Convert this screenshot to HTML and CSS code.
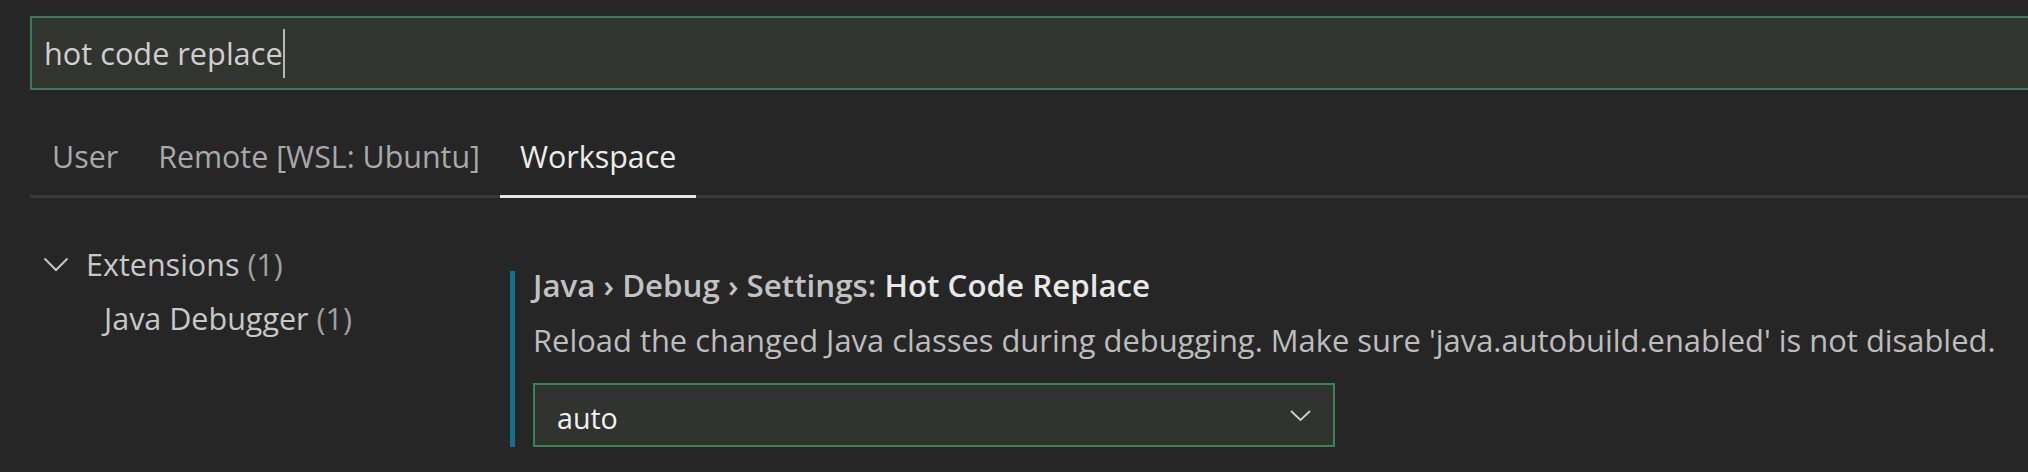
FILE: index.html
```html
<!DOCTYPE html>
<html lang="en">
<head>
<meta charset="utf-8">
<title>Settings</title>
<link rel="stylesheet" href="styles.css">
</head>
<body>
<div class="page">
  <div class="search"><span class="search-text">hot code replace</span><span class="caret"></span></div>
  <div class="tabs">
    <div class="tab">User</div>
    <div class="tab">Remote [WSL: Ubuntu]</div>
    <div class="tab active">Workspace</div>
  </div>
  <div class="main">
    <nav class="tree">
      <div class="tree-row group">
        <svg class="twistie" width="26" height="15" viewBox="0 0 26 15"><path d="M1.5 1.5 L13 13 L24.5 1.5" fill="none" stroke="#c5c5c5" stroke-width="2"/></svg>
        <span>Extensions <span class="count">(1)</span></span>
      </div>
      <div class="tree-row child"><span>Java Debugger <span class="count">(1)</span></span></div>
    </nav>
    <section class="setting">
      <div class="title"><span class="cat">Java › Debug › Settings: </span><span class="label">Hot Code Replace</span></div>
      <div class="desc">Reload the changed Java classes during debugging. Make sure 'java.autobuild.enabled' is not disabled.</div>
      <div class="select">
        <span class="value">auto</span>
        <svg class="chev" width="21" height="11" viewBox="0 0 21 11"><path d="M1 1 L10.5 10 L20 1" fill="none" stroke="#d0d0d0" stroke-width="1.8"/></svg>
      </div>
    </section>
  </div>
</div>
</body>
</html>
```
FILE: styles.css
```css
html, body {
  margin: 0;
  padding: 0;
  background: #262626;
  overflow: hidden;
  height: 100%;
}
body {
  font-family: "Open Sans", "Noto Sans", sans-serif;
  color: #cccccc;
}
.page {
  padding: 16px 0 0 30px;
}
.search {
  height: 74px;
  box-sizing: border-box;
  border: 2px solid #3b7a55;
  border-right: none;
  background: #323430;
  margin-right: -10px;
  display: flex;
  align-items: center;
  padding-left: 12px;
}
.search-text {
  font-size: 30.7px;
  color: #cfcfcf;
  white-space: nowrap;
}
.caret {
  width: 2px;
  height: 49px;
  background: #b8b8b8;
}
.tabs {
  display: flex;
  margin-top: 47px;
  padding-left: 2px;
  border-bottom: 3px solid #3a3a3a;
}
.tab {
  font-size: 30.4px;
  line-height: 40px;
  padding: 0 20px 18px;
  margin-bottom: -3px;
  border-bottom: 3px solid transparent;
  color: #a9a9a9;
  white-space: nowrap;
}
.tab.active {
  color: #ececec;
  border-bottom-color: #e7e7e7;
}
.main {
  display: flex;
}
.tree {
  width: 480px;
  flex: none;
  margin-top: 39px;
  font-size: 30.5px;
  line-height: 54px;
  color: #c8c8c8;
}
.tree-row {
  display: flex;
  align-items: center;
  white-space: nowrap;
}
.tree-row.group {
  padding-left: 13px;
}
.twistie {
  margin-right: 17px;
}
.tree-row.child {
  padding-left: 74px;
}
.count {
  color: #a0a0a0;
}
.setting {
  margin-top: 73px;
  border-left: 5px solid #14718c;
  padding-left: 18px;
  height: 176px;
  box-sizing: border-box;
}
.title {
  font-size: 31.3px;
  line-height: 28px;
  font-weight: 600;
  white-space: nowrap;
}
.cat {
  color: #c2c2c2;
}
.label {
  color: #e8e8e8;
}
.desc {
  margin-top: 26px;
  font-size: 30.9px;
  line-height: 30px;
  color: #bdbdbd;
  white-space: nowrap;
}
.select {
  margin-top: 28px;
  width: 802px;
  height: 64px;
  box-sizing: border-box;
  border: 2px solid #3a8358;
  background: #313330;
  display: flex;
  align-items: center;
  justify-content: space-between;
  padding: 0 22px;
}
.value {
  font-size: 28.6px;
  padding-top: 4px;
  color: #f2f2f2;
}
```
